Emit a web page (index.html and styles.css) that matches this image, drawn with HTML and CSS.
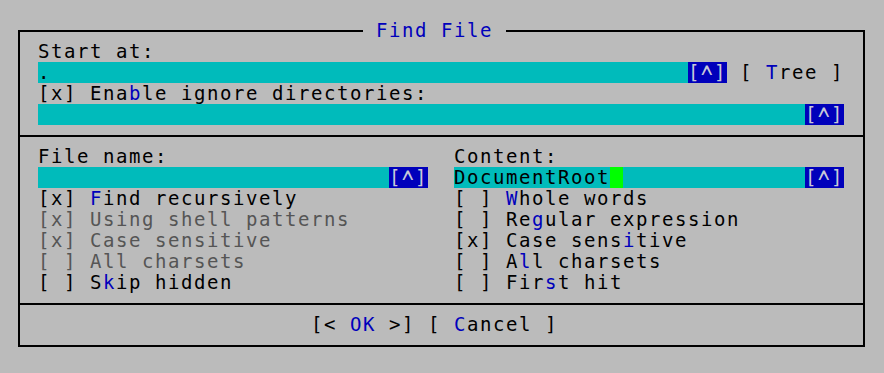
FILE: index.html
```html
<!DOCTYPE html>
<html>
<head>
<meta charset="utf-8">
<link rel="stylesheet" href="styles.css">
</head>
<body>
<div class="frame">
  <div class="title"> Find File </div>
  <div class="row">Start at:</div>
  <div class="row">
    <div class="input w53"><span class="val">.</span><span class="hist">[<span class="caret">^</span>]</span></div><span class="btn"> [ <span class="hk">T</span>ree ]</span>
  </div>
  <div class="row">[x] Ena<span class="hk">b</span>le ignore directories:</div>
  <div class="row">
    <div class="input w62"><span class="val"></span><span class="hist">[<span class="caret">^</span>]</span></div>
  </div>
  <div class="sep"></div>
  <div class="cols">
    <div class="col left">
      <div class="row">File name:</div>
      <div class="row"><div class="input w30"><span class="val"></span><span class="hist">[<span class="caret">^</span>]</span></div></div>
      <div class="row">[x] <span class="hk">F</span>ind recursively</div>
      <div class="row dis">[x] Using shell patterns</div>
      <div class="row dis">[x] Case sensitive</div>
      <div class="row dis">[ ] All charsets</div>
      <div class="row">[ ] S<span class="hk">k</span>ip hidden</div>
    </div>
    <div class="col">
      <div class="row">Content:</div>
      <div class="row"><div class="input w30"><span class="val">DocumentRoot<span class="cursor"></span></span><span class="hist">[<span class="caret">^</span>]</span></div></div>
      <div class="row">[ ] <span class="hk">W</span>hole words</div>
      <div class="row">[ ] Re<span class="hk">g</span>ular expression</div>
      <div class="row">[x] Case sens<span class="hk">i</span>tive</div>
      <div class="row">[ ] A<span class="hk">l</span>l charsets</div>
      <div class="row">[ ] Fir<span class="hk">s</span>t hit</div>
    </div>
  </div>
  <div class="sep"></div>
  <div class="row buttons">[&lt; <span class="hk">OK</span> &gt;] [ <span class="hk">C</span>ancel ]</div>
</div>
</body>
</html>
```

FILE: styles.css
```css
html, body {
  margin: 0;
  padding: 0;
}
body {
  background: #bbbbbb;
  color: #000000;
  font-family: "DejaVu Sans Mono", "Liberation Mono", monospace;
  font-size: 19px;
  letter-spacing: 1.561px;
  line-height: 21px;
  width: 884px;
  height: 373px;
  overflow: hidden;
}
.frame {
  position: relative;
  box-sizing: border-box;
  margin: 30px 0 0 18px;
  width: 847px;
  border: 2px solid #000000;
  padding: 9px 0 10px 18px;
}
.title {
  position: absolute;
  left: 343px;
  top: -12px;
  height: 21px;
  white-space: pre;
  color: #0000bb;
  background: #bbbbbb;
}
.row {
  height: 21px;
  white-space: pre;
  display: flex;
}
.dis {
  color: #555555;
}
.hk {
  color: #0000bb;
}
.input {
  display: flex;
  background: #00bbbb;
  color: #000000;
  height: 21px;
}
.w53 { width: 689px; }
.w62 { width: 806px; }
.w30 { width: 390px; }
.val {
  flex: 1;
  display: flex;
  white-space: pre;
}
.cursor {
  display: inline-block;
  width: 13px;
  height: 21px;
  background: #00ff00;
}
.hist {
  display: flex;
  width: 39px;
  height: 21px;
  background: #0000bb;
  color: #c8c8d8;
  white-space: pre;
}
.caret {
  display: inline-block;
  width: 13px;
  transform-origin: 6px 4px;
  transform: scale(1.05, 1.9);
}
.btn {
  white-space: pre;
}
.sep {
  height: 2px;
  background: #000000;
  margin: 10px 0 9px -18px;
}
.cols {
  display: grid;
  grid-template-columns: 416px 1fr;
}
.col {
  display: flex;
  flex-direction: column;
}
.buttons {
  padding-left: 273px;
}
```
